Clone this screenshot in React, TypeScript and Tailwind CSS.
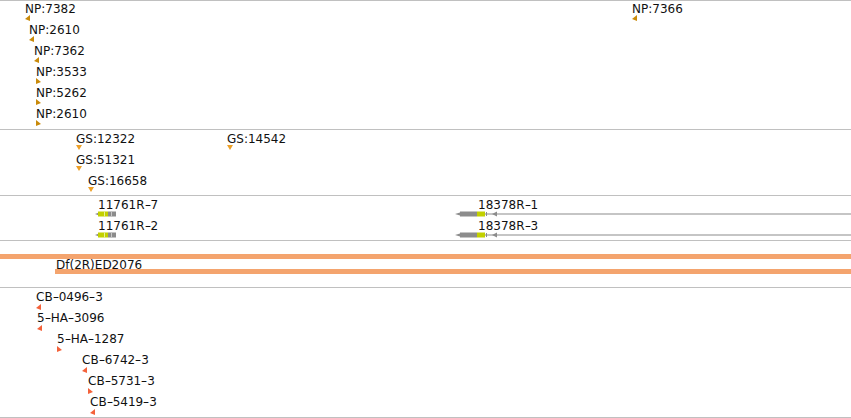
import React from "react";

type Strand = "left" | "right" | "down";

type Feature = {
  label: string;
  x: number;
  row: number;
  strand: Strand;
};

const npFeatures: Feature[] = [
  { label: "NP:7382", x: 25, row: 0, strand: "left" },
  { label: "NP:7366", x: 632, row: 0, strand: "left" },
  { label: "NP:2610", x: 29, row: 1, strand: "left" },
  { label: "NP:7362", x: 34, row: 2, strand: "left" },
  { label: "NP:3533", x: 36, row: 3, strand: "right" },
  { label: "NP:5262", x: 36, row: 4, strand: "right" },
  { label: "NP:2610", x: 36, row: 5, strand: "right" },
];

const gsFeatures: Feature[] = [
  { label: "GS:12322", x: 76, row: 0, strand: "down" },
  { label: "GS:14542", x: 227, row: 0, strand: "down" },
  { label: "GS:51321", x: 76, row: 1, strand: "down" },
  { label: "GS:16658", x: 88, row: 2, strand: "down" },
];

const cbFeatures: Feature[] = [
  { label: "CB-0496-3", x: 36, row: 0, strand: "left" },
  { label: "5-HA-3096", x: 37, row: 1, strand: "left" },
  { label: "5-HA-1287", x: 57, row: 2, strand: "right" },
  { label: "CB-6742-3", x: 82, row: 3, strand: "left" },
  { label: "CB-5731-3", x: 88, row: 4, strand: "right" },
  { label: "CB-5419-3", x: 90, row: 5, strand: "left" },
];

const Label = ({ text }: { text: string }) => {
  const parts = text.split("-");
  return (
    <div className="text-[12px] leading-[14px] whitespace-nowrap text-[#111]">
      {parts.map((p, i) => (
        <React.Fragment key={i}>
          {i > 0 && (
            <span className="inline-block w-[6px] text-center scale-x-150">
              -
            </span>
          )}
          {p}
        </React.Fragment>
      ))}
    </div>
  );
};

const Marker = ({ strand, color }: { strand: Strand; color: string }) => {
  if (strand === "down") {
    return (
      <svg width="6" height="5" viewBox="0 0 6 5" className="block">
        <polygon points="0,0 6,0 3,5" fill={color} />
      </svg>
    );
  }
  return (
    <svg width="5" height="6" viewBox="0 0 5 6" className="block">
      {strand === "left" ? (
        <polygon points="5,0 5,6 0,4" fill={color} />
      ) : (
        <polygon points="0,0 0,6 5,4" fill={color} />
      )}
    </svg>
  );
};

const FeatureTrack = ({
  features,
  height,
  top,
  markerGap,
  color,
}: {
  features: Feature[];
  height: string;
  top: number;
  markerGap: number;
  color: string;
}) => (
  <div className={`relative border-b border-[#c0c0c0] ${height}`}>
    {features.map((f, i) => (
      <div
        key={i}
        className="absolute"
        style={{ left: f.x, top: top + f.row * 21 }}
      >
        <Label text={f.label} />
        <div style={{ marginTop: markerGap - 14 }}>
          <Marker strand={f.strand} color={color} />
        </div>
      </div>
    ))}
  </div>
);

const ShortGene = () => (
  <svg width="22" height="6" viewBox="0 0 22 6" className="block">
    <polygon points="0,3 4,1.5 4,4.5" fill="#8c8c8c" />
    <rect x="3" y="0.5" width="10" height="5" fill="#c2d000" />
    <rect x="9" y="0.5" width="1" height="5" fill="#e8ef99" />
    <rect x="13" y="0.5" width="8" height="5" fill="#8c8c8c" />
    <rect x="16" y="0.5" width="1" height="5" fill="#c8c8c8" />
  </svg>
);

const LongGene = () => (
  <svg width="396" height="6" viewBox="0 0 396 6" className="block">
    <polygon points="0,3 5,1.5 5,4.5" fill="#8c8c8c" />
    <rect x="5" y="0.5" width="17" height="5" fill="#8c8c8c" />
    <rect x="22" y="0.5" width="8" height="5" fill="#c2d000" />
    <rect x="30" y="2.5" width="366" height="1" fill="#8c8c8c" />
    <rect x="31" y="1" width="1" height="4" fill="#8c8c8c" />
    <polygon points="37,3 42,0.5 42,5.5" fill="#8c8c8c" />
  </svg>
);

const genes = [
  { label: "11761R-7", x: 98, glyphX: 95, row: 0, long: false },
  { label: "11761R-2", x: 98, glyphX: 95, row: 1, long: false },
  { label: "18378R-1", x: 478, glyphX: 455, row: 0, long: true },
  { label: "18378R-3", x: 478, glyphX: 455, row: 1, long: true },
];

export default function App() {
  return (
    <div
      className="w-[851px] h-[418px] overflow-hidden bg-white border-t border-[#c0c0c0]"
      style={{ fontFamily: '"DejaVu Sans", Verdana, sans-serif' }}
    >
      <FeatureTrack
        features={npFeatures}
        height="h-[129px]"
        top={1}
        markerGap={13}
        color="#c98a0a"
      />
      <FeatureTrack
        features={gsFeatures}
        height="h-[66px]"
        top={2}
        markerGap={13}
        color="#eda028"
      />

      {/* transcripts */}
      <div className="relative h-[45px] border-b border-[#c0c0c0]">
        {genes.map((g, i) => (
          <React.Fragment key={i}>
            <div
              className="absolute"
              style={{ left: g.x, top: 2 + g.row * 21 }}
            >
              <Label text={g.label} />
            </div>
            <div
              className="absolute"
              style={{ left: g.glyphX, top: 15 + g.row * 21 }}
            >
              {g.long ? <LongGene /> : <ShortGene />}
            </div>
          </React.Fragment>
        ))}
      </div>

      {/* deficiency */}
      <div className="h-[47px] border-b border-[#c0c0c0] pt-[13px]">
        <div className="h-[5px] bg-[#f4a46e]" />
        <div className="ml-[55px] mt-[-1px]">
          <div className="pl-[1px] text-[12px] leading-[14px] whitespace-nowrap text-[#111]">
            Df(2R)ED2076
          </div>
          <div className="h-[5px] mt-[-3px] bg-[#f4a46e]" />
        </div>
      </div>

      <FeatureTrack
        features={cbFeatures}
        height="h-[130px]"
        top={2}
        markerGap={14}
        color="#f4623a"
      />
    </div>
  );
}
